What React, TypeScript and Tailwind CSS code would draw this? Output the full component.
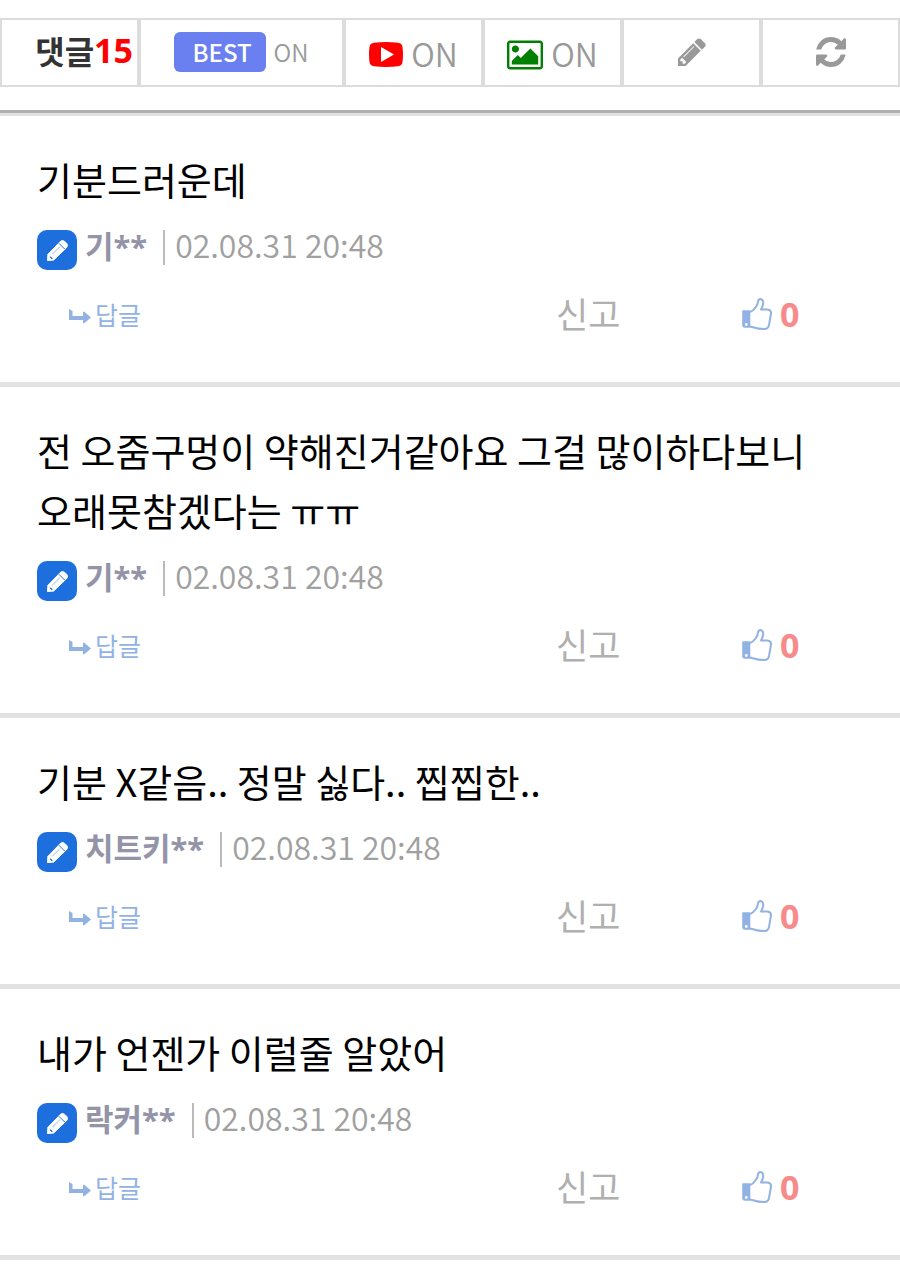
type Comment = {
  id: number
  lines: string[]
  author: string
  date: string
  likes: number
}

const comments: Comment[] = [
  { id: 1, lines: ['기분드러운데'], author: '기**', date: '02.08.31 20:48', likes: 0 },
  {
    id: 2,
    lines: ['전 오줌구멍이 약해진거같아요 그걸 많이하다보니', '오래못참겠다는 ㅠㅠ'],
    author: '기**',
    date: '02.08.31 20:48',
    likes: 0,
  },
  { id: 3, lines: ['기분 X같음.. 정말 싫다.. 찝찝한..'], author: '치트키**', date: '02.08.31 20:48', likes: 0 },
  { id: 4, lines: ['내가 언젠가 이럴줄 알았어'], author: '락커**', date: '02.08.31 20:48', likes: 0 },
]

function PencilIcon({ className }: { className: string }) {
  return (
    <svg viewBox="128 128 1536 1536" fill="currentColor" className={className} aria-hidden="true">
      <path d="M491 1536l91-91-235-235-91 91v107h128v128h107zm523-928q0-22-22-22-10 0-17 7l-542 542q-7 7-7 17 0 22 22 22 10 0 17-7l542-542q7-7 7-17zm-54-192l416 416-832 832h-416v-416zm683 96q0 53-37 90l-166 166-416-416 166-165q36-38 90-38 53 0 91 38l235 234q37 39 37 91z" />
    </svg>
  )
}

function BadgePencilIcon({ className }: { className: string }) {
  return (
    <svg viewBox="0 0 24 24" className={className} aria-hidden="true">
      <path
        d="M1.500 22.500L2 16 15 2.500q2-2 4.500 0l2 2q2 2 0 4.500L8 22z"
        fill="white"
        stroke="white"
        strokeWidth="1"
        strokeLinejoin="round"
      />
      <path d="M13.500 4.500l6 6" stroke="#1c6fdd" strokeWidth="1" />
      <path d="M6.500 16l8-8" stroke="#1c6fdd" strokeWidth="0.800" opacity="0.600" />
      <path d="M4 17.500l1 1.200 1.200.3.800 1.500-1 .5-2-2z" fill="#1c6fdd" />
    </svg>
  )
}

function RefreshIcon({ className }: { className: string }) {
  return (
    <svg viewBox="128 128 1536 1536" fill="currentColor" className={className} aria-hidden="true">
      <path d="M1639 1056q0 5-1 7-64 268-268 434.500t-478 166.500q-146 0-282.500-55t-243.500-157l-129 129q-19 19-45 19t-45-19-19-45v-448q0-26 19-45t45-19h448q26 0 45 19t19 45-19 45l-137 137q71 66 161 102t187 36q134 0 250-65t186-179q11-17 53-117 8-23 30-23h192q13 0 22.500 9.500t9.500 22.500zm25-800v448q0 26-19 45t-45 19h-448q-26 0-45-19t-19-45 19-45l138-138q-148-137-349-137-134 0-250 65t-186 179q-11 17-53 117-8 23-30 23h-199q-13 0-22.500-9.500t-9.500-22.500v-7q65-268 270-434.500t480-166.500q146 0 284 55.500t245 156.500l130-129q19-19 45-19t45 19 19 45z" />
    </svg>
  )
}

function YoutubeIcon({ className }: { className: string }) {
  return (
    <svg viewBox="0 0 34 25" className={className} aria-hidden="true">
      <path
        d="M5 .8Q17-.6 29 .8Q33 1.200 33.500 5Q34.500 12.500 33.500 20Q33 23.800 29 24.200Q17 25.600 5 24.200Q1 23.800.5 20Q-.5 12.500.5 5Q1 1.200 5 .8z"
        fill="#f00"
      />
      <path d="M12 5l13 7.500-13 7.500z" fill="white" />
    </svg>
  )
}

function PictureIcon({ className }: { className: string }) {
  return (
    <svg viewBox="-64 128 1920 1536" fill="currentColor" className={className} aria-hidden="true">
      <path d="M576 576q0 80-56 136t-136 56-136-56-56-136 56-136 136-56 136 56 56 136zm1024 384v448h-1408v-192l320-320 160 160 512-512zm96-704h-1600q-13 0-22.500 9.500t-9.500 22.500v1216q0 13 9.500 22.500t22.500 9.500h1600q13 0 22.500-9.500t9.500-22.500v-1216q0-13-9.500-22.500t-22.500-9.500zm160 32v1216q0 66-47 113t-113 47h-1600q-66 0-113-47t-47-113v-1216q0-66 47-113t113-47h1600q66 0 113 47t47 113z" />
    </svg>
  )
}

function ThumbIcon({ className }: { className: string }) {
  return (
    <svg viewBox="0 0 30 32" className={className} aria-hidden="true">
      <path
        d="M1 13h6.500v16H3q-2 0-2-2z"
        fill="currentColor"
        stroke="currentColor"
        strokeWidth="1.600"
        strokeLinejoin="round"
      />
      <circle cx="4.300" cy="26.500" r="1.400" fill="white" />
      <path
        d="M8 14q3-1 5.500-4.500Q16 6 16 3.500Q16.500 1 18.500 1Q21.500 1.500 21.200 5.500Q20.800 8.500 19 11.500H25.500q3.800.5 3.500 4L27 27q-.8 4-4.500 4Q16 31 12 29.500L8 28.500"
        fill="none"
        stroke="currentColor"
        strokeWidth="2"
        strokeLinejoin="round"
      />
    </svg>
  )
}

function ReplyIcon({ className }: { className: string }) {
  return (
    <svg viewBox="0 0 22 16" fill="currentColor" className={className} aria-hidden="true">
      <path d="M0 1l3.500 2v5H14V4.500q0-1.500 1.500-.5L22 9.500 15.500 15q-1.500 1-1.500-.5V12H0z" />
    </svg>
  )
}

const tool = 'flex items-center justify-center border-2 border-[#dcdcdc] text-[#999]'

function Toolbar() {
  return (
    <div className="mt-[18px] grid h-[69px] grid-cols-[139fr_205fr_139fr_139fr_139fr_139fr]">
      <h2 className="flex items-center justify-end border-2 border-[#dcdcdc] pr-1 pb-1.5 text-[32px] leading-10 font-bold text-[#333]">
        댓글
        <span className="font-['Noto_Sans',sans-serif] text-[34px] text-[#f00]">15</span>
      </h2>
      <button type="button" className={`${tool} gap-2 pb-0.5`}>
        <span className="flex h-10 items-center rounded-md bg-[#6b80f0] pr-3.5 pl-[18px] text-[24px] font-medium text-white">
          BEST
        </span>
        <span className="text-[24px] font-[350]">ON</span>
      </button>
      <button type="button" className={`${tool} gap-2`}>
        <YoutubeIcon className="mt-1 h-[25px] w-[34px]" />
        <span className="text-[32px] leading-10 font-[350]">ON</span>
      </button>
      <button type="button" className={`${tool} gap-2`}>
        <PictureIcon className="mt-1 h-[30px] w-9 text-[#008000]" />
        <span className="text-[32px] leading-10 font-[350]">ON</span>
      </button>
      <button type="button" aria-label="댓글 쓰기" className={`${tool} pb-0.5`}>
        <PencilIcon className="size-7" />
      </button>
      <button type="button" aria-label="새로고침" className={`${tool} pb-0.5`}>
        <RefreshIcon className="size-[30px]" />
      </button>
    </div>
  )
}

function CommentItem({ comment }: { comment: Comment }) {
  return (
    <li className="border-b-[5px] border-[#e2e2e2] px-[37px] pt-[33px] pb-[49px]">
      <div className="text-[38px] leading-[60px] text-black">
        {comment.lines.map((line) => (
          <p key={line}>{line}</p>
        ))}
      </div>
      <div className="mt-[21px] flex h-10 items-start text-[32px]">
        <span className="flex size-10 items-center justify-center rounded-[10px] bg-[#1c6fdd] text-white">
          <BadgePencilIcon className="size-[23px]" />
        </span>
        <strong className="ml-2 font-['Noto_Sans','Noto_Sans_CJK_KR',sans-serif] text-[31px] leading-8 font-bold text-[#9494a8]">
          {comment.author}
        </strong>
        <span className="mr-2.5 ml-4 h-[35px] w-0.5 bg-[#bbb]" />
        <time className="leading-7 font-[350] text-[#a0a0a0]">{comment.date}</time>
      </div>
      <div className="mt-[23px] grid h-10 grid-cols-[1fr_186px_121px] items-center">
        <button type="button" className="ml-8 flex items-center gap-1 text-[25px] text-[#92b2e3]">
          <ReplyIcon className="mt-0.5 h-4 w-[22px]" />
          답글
        </button>
        <button type="button" className="pb-1 text-left text-[35px] leading-10 text-[#b0b0b0]">
          신고
        </button>
        <button
          type="button"
          aria-label={`추천 ${comment.likes}`}
          className="flex items-center gap-2 pb-0.5 text-[#92b2e3]"
        >
          <ThumbIcon className="h-8 w-[30px]" />
          <span className="font-['Noto_Sans',sans-serif] text-[34px] leading-10 font-bold text-[#f78a8a]">
            {comment.likes}
          </span>
        </button>
      </div>
    </li>
  )
}

export default function App() {
  return (
    <main className="flow-root bg-white font-['Noto_Sans_CJK_KR',sans-serif]">
      <Toolbar />
      <ul className="mt-[23px] border-t-[3px] border-[#b0b0b0]">
        <li className="h-[3px] bg-[#e2e2e2]" aria-hidden="true" />
        {comments.map((comment) => (
          <CommentItem key={comment.id} comment={comment} />
        ))}
      </ul>
    </main>
  )
}
